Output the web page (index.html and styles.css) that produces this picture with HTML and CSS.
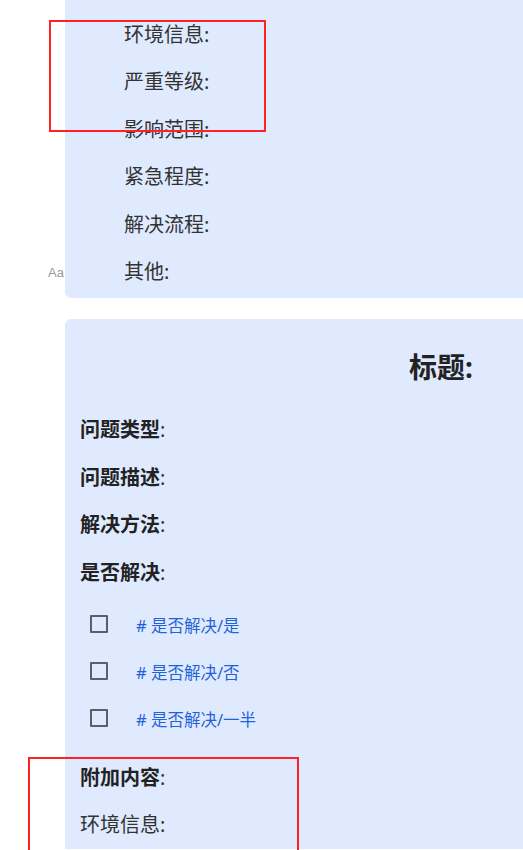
FILE: index.html
```html
<!DOCTYPE html>
<html lang="zh">
<head>
<meta charset="utf-8">
<title>问题模板</title>
<link rel="stylesheet" href="styles.css">
</head>
<body>
<div class="page">
  <section class="card card-top">
    <ul class="fields indented">
      <li>环境信息:</li>
      <li>严重等级:</li>
      <li>影响范围:</li>
      <li>紧急程度:</li>
      <li>解决流程:</li>
      <li class="with-aa"><span class="aa">Aa</span>其他:</li>
    </ul>
  </section>

  <section class="card card-main">
    <h1 class="title">标题:</h1>
    <ul class="fields">
      <li><b>问题类型</b>:</li>
      <li><b>问题描述</b>:</li>
      <li><b>解决方法</b>:</li>
      <li><b>是否解决</b>:</li>
    </ul>
    <ul class="checks">
      <li><span class="box"></span><span class="tag"># 是否解决/是</span></li>
      <li><span class="box"></span><span class="tag"># 是否解决/否</span></li>
      <li><span class="box"></span><span class="tag"># 是否解决/一半</span></li>
    </ul>
    <ul class="fields extra">
      <li><b>附加内容</b>:</li>
      <li>环境信息:</li>
    </ul>
  </section>

  <div class="mark mark-1"></div>
  <div class="mark mark-2"></div>
</div>
</body>
</html>
```

FILE: styles.css
```css
html, body {
  margin: 0;
  padding: 0;
  background: #ffffff;
  overflow: hidden;
}

body {
  width: 523px;
  height: 850px;
  font-family: "Noto Sans", "Noto Sans CJK SC", sans-serif;
  color: #333333;
}

.page {
  position: relative;
  display: flex;
  flex-direction: column;
  gap: 21px;
  padding-left: 65px;
}

.card {
  width: 752px;
  background: #dfeaff;
  box-sizing: border-box;
}

.card-top {
  border-radius: 0 0 0 6px;
  padding: 11px 0 3px 59px;
}

.card-main {
  border-radius: 6px 0 0 0;
  padding: 28px 0 0 15px;
}

ul {
  list-style: none;
  margin: 0;
  padding: 0;
}

.fields li {
  font-size: 20px;
  line-height: 47.4px;
  height: 47.4px;
  white-space: nowrap;
}

.fields b {
  font-weight: 700;
  color: #222222;
}

.with-aa {
  position: relative;
}

.aa {
  position: absolute;
  left: -76px;
  top: 1px;
  font-size: 13px;
  line-height: 47.4px;
  color: #9a9a9a;
  font-family: "Liberation Sans", "Noto Sans", sans-serif;
}

.title {
  margin: 0 0 19px 0;
  padding-right: 15px;
  text-align: center;
  font-size: 28px;
  line-height: 40px;
  font-weight: 700;
  color: #222222;
}

.checks {
  margin-top: 6px;
}

.checks li {
  display: flex;
  align-items: center;
  height: 47px;
  padding-left: 10px;
}

.box {
  width: 18px;
  height: 18px;
  box-sizing: border-box;
  border: 2px solid #5b5f66;
  border-radius: 1px;
  margin-top: -2px;
  flex: none;
}

.tag {
  margin-left: 28px;
  font-size: 16.5px;
  color: #1f63d8;
}

.extra {
  margin-top: 11px;
}

.mark {
  position: absolute;
  border: 2px solid #ff2222;
  box-sizing: border-box;
  pointer-events: none;
}

.mark-1 {
  left: 49px;
  top: 20px;
  width: 217px;
  height: 112px;
}

.mark-2 {
  left: 28px;
  top: 757px;
  width: 271px;
  height: 120px;
}
```
